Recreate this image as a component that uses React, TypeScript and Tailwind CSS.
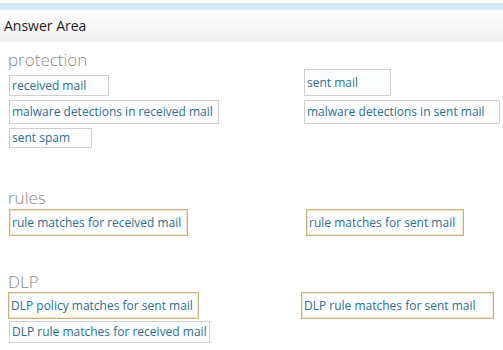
import React from "react";

type Item = { label: string; gold?: boolean; h: string; w: string };

function Box({ item }: { item: Item }) {
  return (
    <div
      className={`${item.h} ${item.w} flex items-center whitespace-nowrap border px-[2px] text-[12px] leading-none text-[#2f6f8f] bg-[#fbfdfe] ${
        item.gold ? "border-[#c9b27c] shadow-[inset_0_0_0_1px_#efe6cf]" : "border-[#cfcfcf]"
      }`}
    >
      {item.label}
    </div>
  );
}

function Heading({ children, className }: { children: React.ReactNode; className: string }) {
  return <div className={`${className} pl-[8px] text-[17px] leading-none font-light text-[#8a8a8a]`}>{children}</div>;
}

export default function App() {
  return (
    <div className="w-[503px] h-[350px] overflow-hidden bg-white" style={{ fontFamily: '"Open Sans", "Noto Sans", sans-serif' }}>
      <div className="pt-[3px]">
        <div className="h-[7px] bg-[#d8e9f6]" />
      </div>
      <div className="h-[32px] flex items-center pl-[4px] text-[14px] leading-none text-[#1e1e1e] bg-gradient-to-b from-white to-[#efefef]">
        Answer Area
      </div>

      <Heading className="mt-[9px] h-[18px]">protection</Heading>
      <div className="flex items-end">
        <div className="w-[304px] pl-[9px]">
          <Box item={{ label: "received mail", h: "h-[21px]", w: "w-[100px]" }} />
        </div>
        <Box item={{ label: "sent mail", h: "h-[27px]", w: "w-[87px]" }} />
      </div>
      <div className="flex mt-[4px]">
        <div className="w-[304px] pl-[9px]">
          <Box item={{ label: "malware detections in received mail", h: "h-[24px]", w: "w-[210px]" }} />
        </div>
        <Box item={{ label: "malware detections in sent mail", h: "h-[24px]", w: "w-[196px]" }} />
      </div>
      <div className="pl-[9px] mt-[4px]">
        <Box item={{ label: "sent spam", h: "h-[20px]", w: "w-[83px]" }} />
      </div>

      <Heading className="mt-[41px] h-[20px]">rules</Heading>
      <div className="flex">
        <div className="w-[306px] pl-[9px]">
          <Box item={{ label: "rule matches for received mail", gold: true, h: "h-[27px]", w: "w-[179px]" }} />
        </div>
        <Box item={{ label: "rule matches for sent mail", gold: true, h: "h-[27px]", w: "w-[158px]" }} />
      </div>

      <Heading className="mt-[37px] h-[19px]">DLP</Heading>
      <div className="flex">
        <div className="w-[301px] pl-[8px]">
          <Box item={{ label: "DLP policy matches for sent mail", gold: true, h: "h-[27px]", w: "w-[191px]" }} />
        </div>
        <Box item={{ label: "DLP rule matches for sent mail", gold: true, h: "h-[27px]", w: "w-[193px]" }} />
      </div>
      <div className="pl-[9px] mt-[2px]">
        <Box item={{ label: "DLP rule matches for received mail", h: "h-[22px]", w: "w-[201px]" }} />
      </div>
    </div>
  );
}
